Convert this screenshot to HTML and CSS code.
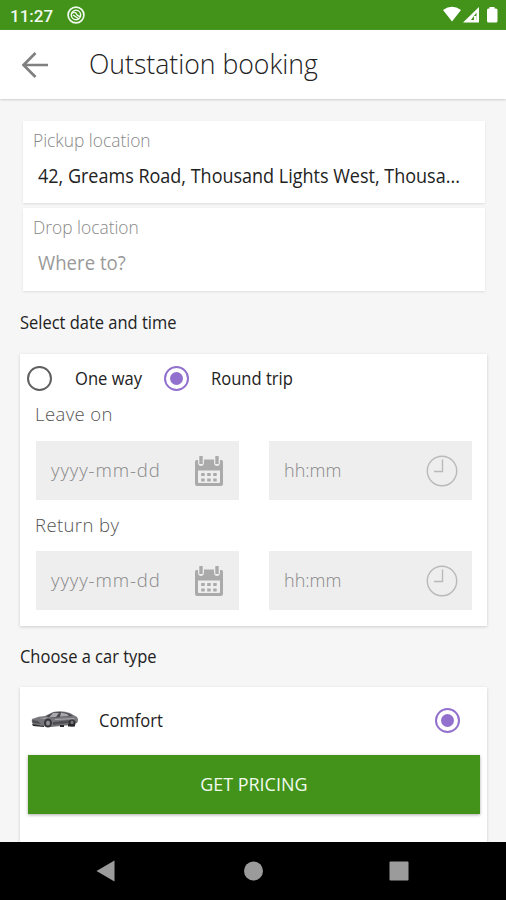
FILE: index.html
```html
<!DOCTYPE html>
<html lang="en">
<head>
<meta charset="utf-8">
<title>Outstation booking</title>
<link rel="stylesheet" href="styles.css">
</head>
<body>
<svg class="defs" aria-hidden="true">
  <symbol id="calendar" viewBox="0 0 30 32">
    <path fill="#aaa" fill-rule="evenodd" d="M2.500 5H4V7q0 4 3 4t3-4V4.500H20V7q0 4 3 4t3-4V5h1.500Q29 5 29 7V29q0 2-2 2H3q-2 0-2-2V7q0-2 1.500-2zM4 15.500V27q0 1 1 1H25q1 0 1-1V15.500z"/>
    <path stroke="#aaa" stroke-width="3.400" d="M7 1V9M23 1V9"/>
    <path stroke="#aaa" stroke-width="3" stroke-dasharray="3.500 2.500" d="M7.200 19.500H23M7.200 25H23"/>
  </symbol>
  <symbol id="clock" viewBox="0 0 32 32">
    <g fill="none" stroke="#b9b9b9" stroke-width="1.400"><circle cx="16" cy="16" r="14.700"/><path d="M16.500 4.500V16.500H8"/></g>
  </symbol>
</svg>
<div class="screen">
  <div class="status">
    <span class="time">11:27</span>
    <svg class="app-icon" viewBox="0 0 18 18"><g fill="none" stroke="#f1faee"><circle cx="9" cy="9" r="7.900" stroke-width="1.700"/><circle cx="9" cy="9" r="4.700" stroke-width="1.500"/><path stroke-width="1.500" d="M4.500 7.500Q8 5 9.500 8T13 10M6 9l6 4"/></g></svg>
    <svg class="signals" viewBox="0 0 56 18"><path fill="#fff" d="M0 4Q9-2.500 18 4L9 15.500zM36 1V16.500H20z"/><path fill="#43931b" d="M33.500 6.500V14H28z"/><path fill="#fff" d="M31 10H33.500v4H31zM46.500 1h5v1.500H53q1.500 0 1.500 1.500V15q0 1.500-1.500 1.500H45.500Q44 16.500 44 15V4q0-1.500 1.500-1.500h1z"/></svg>
  </div>
  <header class="header">
    <svg class="back" viewBox="0 0 28 28"><path fill="none" stroke="#808080" stroke-width="2.700" d="M27 14H3M14.500 2L2.500 14l12 12"/></svg>
    <h1 class="title">Outstation booking</h1>
  </header>
  <main class="content">
    <section class="locations">
      <div class="location"><div class="label">Pickup location</div><div class="address">42, Greams Road, Thousand Lights West, Thousa...</div></div>
      <div class="location"><div class="label drop">Drop location</div><div class="address empty">Where to?</div></div>
    </section>
    <h2 class="heading date-heading">Select date and time</h2>
    <section class="card trip">
      <div class="options"><span class="radio"></span><span class="option one">One way</span><span class="radio on"></span><span class="option round">Round trip</span></div>
      <div class="caption">Leave on</div>
      <div class="fields">
        <div class="field"><span class="ph date">yyyy-mm-dd</span><svg class="cal"><use href="#calendar"/></svg></div>
        <div class="field"><span class="ph hour">hh:mm</span><svg class="clk"><use href="#clock"/></svg></div>
      </div>
      <div class="caption return">Return by</div>
      <div class="fields">
        <div class="field"><span class="ph date">yyyy-mm-dd</span><svg class="cal"><use href="#calendar"/></svg></div>
        <div class="field"><span class="ph hour">hh:mm</span><svg class="clk"><use href="#clock"/></svg></div>
      </div>
    </section>
    <h2 class="heading car-heading">Choose a car type</h2>
    <section class="card cars">
      <div class="car-row">
        <svg class="car" viewBox="0 0 48 20">
          <path fill="#77777b" d="M1 9Q8 6 14 6L22 2Q31 0 39 3L46 7Q48 10 46 13L40 15 20 17 3 15Q0 13 1 9z"/>
          <path fill="#48484c" d="M15 6L23 2.500Q31 1 37 3.500L42 6 20 8z"/>
          <path fill="#a9a9ad" d="M22 3h6l-3 4-7 .5zM30 2.500l6 1.500 2 2-9 .7zM8 8l10-.5L14 9zM24 9l20-1-1 1-19 1z"/>
          <path fill="#505054" d="M1 10l6 1 3 3-8-1zM22 12l17-2-1 3-16 2z"/>
          <ellipse cx="17" cy="13" rx="4" ry="4.500" fill="#38383c"/><ellipse cx="17" cy="13" rx="2" ry="2.500" fill="#929296"/>
          <ellipse cx="41" cy="13" rx="3.500" ry="3.500" fill="#303034"/><ellipse cx="41" cy="12.500" rx="1.500" ry="2" fill="#777"/>
          <path fill="#29292d" d="M1 14l12 2v1L2 16zM29 15h4v2h-4zM37 14h7v2.500h-7z"/>
        </svg>
        <span class="option comfort">Comfort</span><span class="radio on"></span>
      </div>
      <button class="pricing"><span class="pricing-text">GET PRICING</span></button>
    </section>
  </main>
  <nav class="navbar">
    <svg viewBox="0 0 20 22"><path fill="#9b9b9b" d="M18.500 .5V21.500L.5 11z"/></svg>
    <svg viewBox="0 0 20 22"><circle cx="10.500" cy="11" r="9.500" fill="#9b9b9b"/></svg>
    <svg viewBox="0 0 20 22"><rect x=".5" y="1.500" width="19" height="19" rx="1" fill="#9b9b9b"/></svg>
  </nav>
</div>
</body>
</html>
```
FILE: styles.css
```css
* { box-sizing: border-box; }
body { margin: 0; font-family: "Open Sans", "Noto Sans", sans-serif; color: #222; }
.defs { display: none; }
svg { display: block; flex: none; }
.screen { width: 506px; height: 900px; display: flex; flex-direction: column; overflow: hidden; background: #f6f6f6; }
.status { height: 30px; flex: none; display: flex; align-items: center; padding: 0 7px 0 10px; background: #43931b; color: #f1faee; }
.time { width: 57px; font: 500 17px/30px Roboto, sans-serif; padding-top: 2px; }
.app-icon { width: 18px; height: 18px; }
.signals { width: 56px; height: 18px; margin-left: auto; }
.header { height: 69px; flex: none; display: flex; align-items: center; padding-left: 21px; background: #fff; box-shadow: 0 1px 2px #ccc; }
.back { width: 28px; height: 28px; margin-right: 40px; }
.title { margin: -2px 0 0; font-size: 27px; font-weight: 300; line-height: 36px; white-space: nowrap; transform: scaleX(.985); transform-origin: left; }
.content { flex: 1; padding: 22px 19px 0 20px; overflow: hidden; }
.locations { display: flex; flex-direction: column; gap: 5px; padding: 0 2px 0 3px; }
.location { height: 82px; padding: 7px 10px 0; background: #fff; box-shadow: 0 1px 2px #ddd; white-space: nowrap; }
.location + .location { height: 83px; }
.label { font-size: 18px; line-height: 24px; font-weight: 300; color: #888; transform: scaleX(.965); transform-origin: left; }
.address { margin: 12px 0 0 5px; font-size: 20px; line-height: 24px; transform: scaleX(.9); transform-origin: left; }
.empty { color: #999; transform: scaleX(.93); }
.heading { margin: 0; font-size: 18px; line-height: 24px; font-weight: 400; transform: scaleX(.915); transform-origin: left; }
.date-heading { margin-top: 19px; }
.card { background: #fff; box-shadow: 0 1px 3px #ccc; }
.trip { height: 272px; margin-top: 20px; padding: 11px 15px 0 16px; }
.options { display: flex; align-items: center; height: 26px; margin-left: -9px; }
.radio { width: 25px; height: 25px; flex: none; border: 2px solid #606060; border-radius: 50%; display: flex; align-items: center; justify-content: center; }
.on { border-color: #9270ce; }
.on::after { content: ""; width: 13px; height: 13px; border-radius: 50%; background: #9270ce; }
.option { font-size: 18px; line-height: 24px; white-space: nowrap; transform: scaleX(.92); transform-origin: left; }
.one { width: 89px; margin-left: 23px; }
.round { margin-left: 22px; }
.caption { margin: 11px 0 15px -1px; line-height: 24px; font-size: 18.5px; font-weight: 300; color: #555; letter-spacing: .4px; }
.return { margin: 13px 0 14px -1px; }
.fields { display: flex; gap: 30px; }
.field { width: 203px; height: 59px; display: flex; align-items: center; padding: 0 15px; background: #eee; }
.ph { flex: 1; margin-top: -2px; font-size: 18px; line-height: 24px; font-weight: 300; color: #888; white-space: nowrap; }
.date { font-size: 18.5px; letter-spacing: .9px; }
.cal { width: 30px; height: 32px; }
.clk { width: 32px; height: 32px; margin-right: -1px; }
.car-heading { margin-top: 18px; }
.cars { height: 180px; margin-top: 19px; padding: 7px 7px 0 8px; }
.car-row { height: 52px; display: flex; align-items: center; padding: 0 20px 0 3px; }
.car { width: 48px; height: 20px; }
.comfort { flex: 1; margin-left: 20px; }
.pricing { display: block; width: 100%; height: 59px; margin-top: 9px; padding: 0 0 2px; border: 0; background: #43931b; box-shadow: 0 1px 3px #aaa; color: #f1faee; font: inherit; font-size: 19px; line-height: 24px; }
.pricing-text { display: inline-block; transform: scaleX(.945); }
.navbar { height: 58px; flex: none; display: flex; justify-content: space-between; align-items: center; padding: 0 97px 0 96px; background: #000; z-index: 1; }
.navbar svg { width: 20px; height: 22px; }
```
